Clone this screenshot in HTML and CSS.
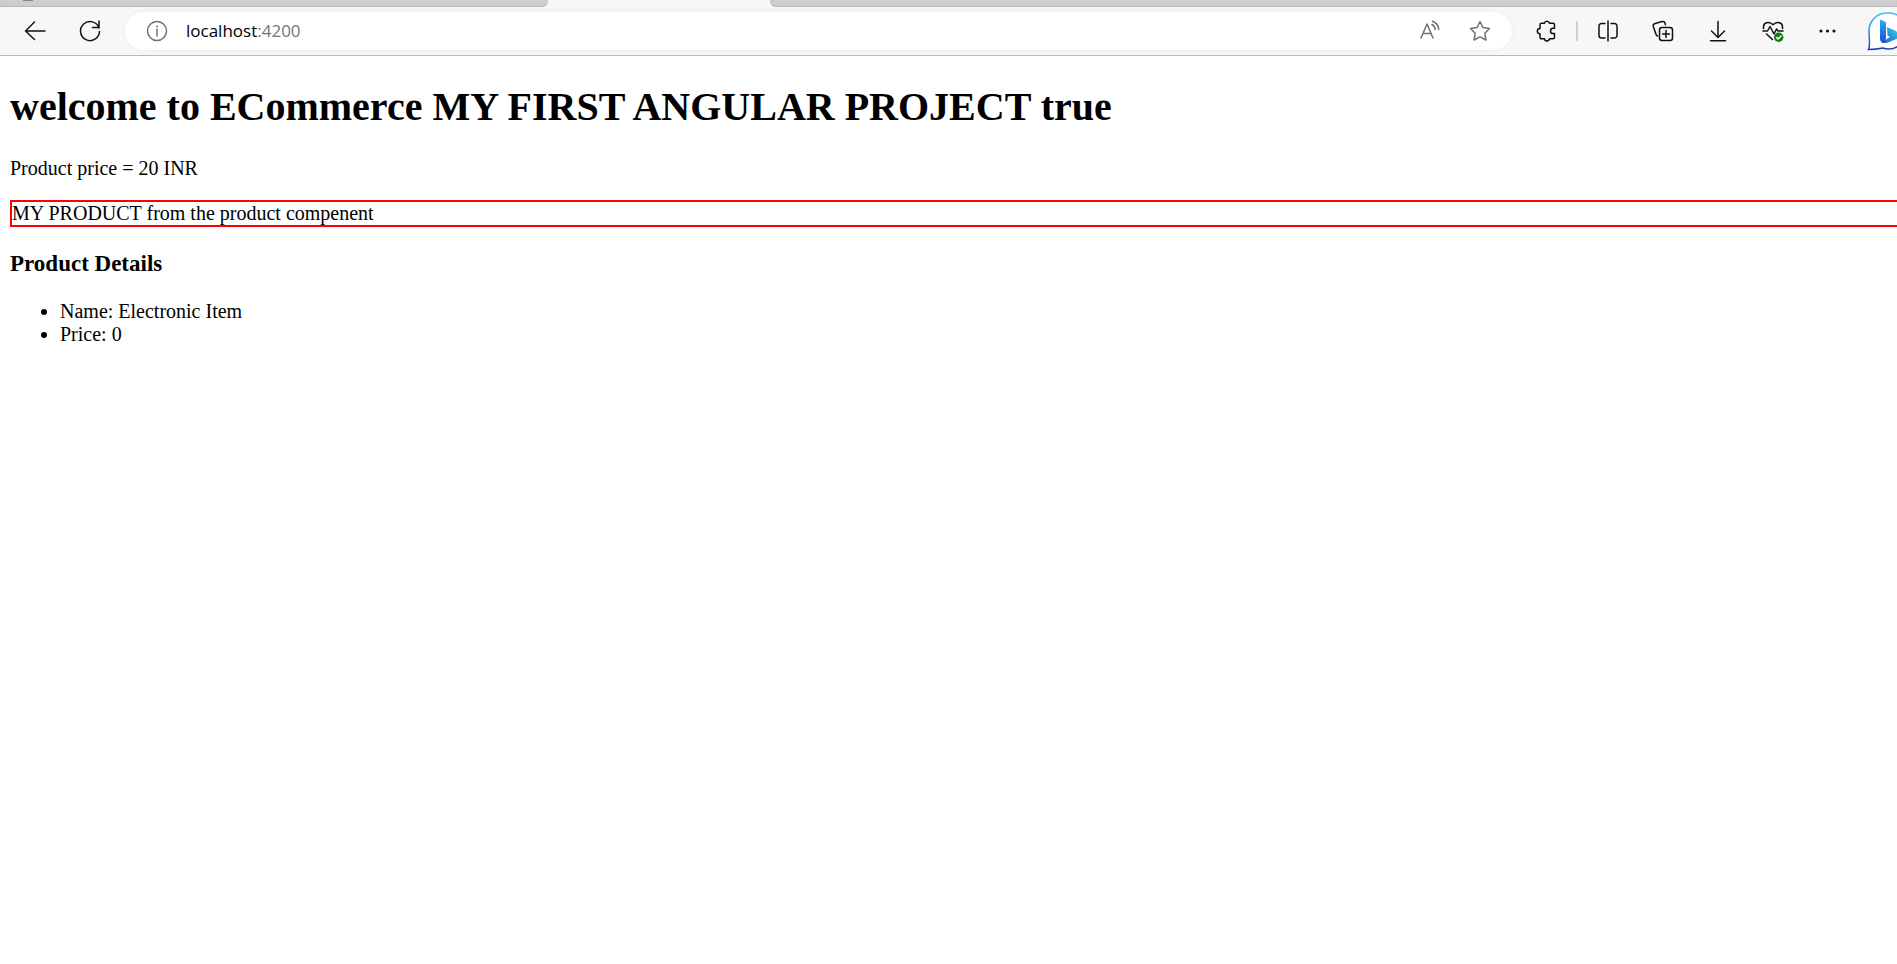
FILE: index.html
```html
<!DOCTYPE html>
<html lang="en">
<head>
<meta charset="utf-8">
<meta name="viewport" content="width=device-width, initial-scale=1">
<title>ECommerce</title>
<link rel="stylesheet" href="styles.css">
</head>
<body>
<header class="browser">
  <div class="tabs">
    <div class="tab-group tab-group-left"><span class="tab-dot"></span></div>
    <div class="tab-active"></div>
    <div class="tab-group tab-group-right"></div>
  </div>
  <div class="toolbar">
    <button class="tool" type="button" aria-label="Back">
      <svg class="icon" viewBox="0 0 24 24"><path d="M22 12H2.500M11.500 3 2.500 12l9 8.500"/></svg>
    </button>
    <button class="tool" type="button" aria-label="Refresh">
      <svg class="icon" viewBox="0 0 24 24"><path d="M21 9A9.500 9.500 0 1 0 21.500 12.500M21 2v6.500h-6.500"/></svg>
    </button>
    <div class="address">
      <button class="inner-tool" type="button" aria-label="Site information">
        <svg class="icon" viewBox="0 0 24 24"><circle cx="12" cy="12" r="9.500"/><path d="M12 10.500V17"/><circle class="solid" cx="12" cy="7.500" r="1"/></svg>
      </button>
      <span class="url">localhost<span class="port">:4200</span></span>
      <button class="inner-tool" type="button" aria-label="Read aloud">
        <svg class="icon" viewBox="0 0 24 24"><path d="M3 19 9 5l6 14M5 14.500h8M14 5.500c1.700 1 3 2.500 3.200 5M14.500 2.200c3.600 1.300 6 4.300 6.300 8.300"/></svg>
      </button>
      <button class="inner-tool" type="button" aria-label="Add to favourites">
        <svg class="icon" viewBox="0 0 24 24"><path d="M12 2.500l2.900 6 6.600 1-4.700 4.700 1.100 6.800L12 17.900 6.100 21l1.100-6.800L2.500 9.500l6.600-1z"/></svg>
      </button>
    </div>
    <button class="tool" type="button" aria-label="Extensions">
      <svg class="icon" viewBox="0 0 24 24"><path d="M6.500 4.200h2.800a2.700 2.700 0 0 1 5.200 0H18a1.500 1.500 0 0 1 1.500 1.500v3.500h-1.300a2.700 2.700 0 0 0 0 5.400h1.300v3.700a1.500 1.500 0 0 1-1.500 1.500h-3.500a2.600 2.600 0 0 1-5.100 0H6.500A1.500 1.500 0 0 1 5 18.300v-3.500a2.700 2.700 0 0 1 0-5.400V5.700a1.500 1.500 0 0 1 1.500-1.500z"/></svg>
    </button>
    <span class="divider"></span>
    <button class="tool" type="button" aria-label="Split screen">
      <svg class="icon" viewBox="0 0 24 24"><path d="M9 4.500H5.500a2.500 2.500 0 0 0-2.500 2.500v9.500a2.500 2.500 0 0 0 2.500 2.500H9M15 4.500h3.500a2.500 2.500 0 0 1 2.500 2.500v9.500a2.500 2.500 0 0 1-2.500 2.500H15M12 2v20"/></svg>
    </button>
    <button class="tool" type="button" aria-label="Collections">
      <svg class="icon" viewBox="0 0 24 24"><rect x="8.500" y="8.500" width="13" height="13" rx="2.500"/><path d="M15 11.500v7M11.500 15h7M6.500 17.200a3 3 0 0 1-1.500-2L2.300 7.500a2.500 2.500 0 0 1 1.800-3l7-2a2.500 2.500 0 0 1 3 1.800l.4 1.500"/></svg>
    </button>
    <button class="tool" type="button" aria-label="Downloads">
      <svg class="icon" viewBox="0 0 24 24"><path d="M12 2.500V18M5.500 12l6.500 6.500 6.500-6.500M4.500 21.700h15"/></svg>
    </button>
    <button class="tool" type="button" aria-label="Browser essentials">
      <svg class="icon" viewBox="0 0 24 24"><path d="M2.600 9.500C1.500 3.500 8 1.500 12 5.700 16 1.500 22.500 3.500 21.400 9.500M2 12h4.500L9 7.500l4 7.500 2.500-5 1.500 2h5M5.500 15l6 5.500"/><circle class="badge" cx="17.700" cy="18.300" r="4.700"/><path class="check" d="m15.500 18.500 1.500 1.500 3-3"/></svg>
    </button>
    <button class="tool" type="button" aria-label="More">
      <svg class="icon" viewBox="0 0 24 24"><circle class="solid" cx="5" cy="12" r="1.600"/><circle class="solid" cx="11.500" cy="12" r="1.600"/><circle class="solid" cx="18" cy="12" r="1.600"/></svg>
    </button>
    <button class="bing" type="button" aria-label="Bing">
      <svg class="bing-logo" viewBox="0 0 40 40">
        <defs>
          <linearGradient id="ring" x1="0" y1="0" x2="0" y2="1"><stop offset="0" stop-color="#35c3f3"/><stop offset=".55" stop-color="#2385de"/><stop offset="1" stop-color="#2340b0"/></linearGradient>
          <linearGradient id="stem" x1="0" y1="0" x2="0" y2="1"><stop offset="0" stop-color="#2ba8f5"/><stop offset="1" stop-color="#174fd0"/></linearGradient>
          <linearGradient id="bowl" x1="0" y1="1" x2="1" y2="0"><stop offset="0" stop-color="#1b55d8"/><stop offset="1" stop-color="#35d5e8"/></linearGradient>
        </defs>
        <path fill="#fff" stroke="url(#ring)" stroke-width="1.500" d="M20 2a18 18 0 1 1-4 35C11 38 6 38.500 1.500 38.500 3.500 35 2 26 2 20A18 18 0 0 1 20 2z"/>
        <path fill="url(#bowl)" d="M20 16 28 19.500c3.500 1.500 4 6 1.500 8.500L19.500 32l-5-.5L23 26l-2.500-1.500z"/>
        <path fill="url(#stem)" d="M13 8.500l4.500 2a2 2 0 0 1 1.500 1.800V27l-1 5c-2.500.5-5-1.500-5-4z"/>
      </svg>
    </button>
  </div>
</header>
<main class="page">
  <h1 class="title">welcome to ECommerce MY FIRST ANGULAR PROJECT true</h1>
  <p class="price">Product price = 20 INR</p>
  <div class="product">MY PRODUCT from the product compenent</div>
  <h3 class="subtitle">Product Details</h3>
  <ul class="details">
    <li>Name: Electronic Item</li>
    <li>Price: 0</li>
  </ul>
</main>
</body>
</html>
```
FILE: styles.css
```css
body {
  margin: 0;
  background: #fff;
  color: #000;
  font: 20px/23px "Liberation Serif", "Times New Roman", serif;
  overflow-x: hidden;
}

.browser {
  background: #f7f7f7;
  border-bottom: 1px solid #b8b8b8;
  overflow: hidden;
}

.tabs {
  display: flex;
  height: 7px;
}

.tab-group {
  background: #cdcdcd;
  box-shadow: inset 0 -1px 1px #b8b8b8;
  overflow: hidden;
}

.tab-group-left {
  flex: 0 0 548px;
  border-bottom-right-radius: 6px;
}

.tab-active {
  flex: 0 0 222px;
}

.tab-group-right {
  flex: 1;
  border-bottom-left-radius: 6px;
}

.tab-dot {
  display: block;
  width: 10px;
  height: 1px;
  margin-left: 23px;
  background: #858585;
}

.toolbar {
  display: flex;
  align-items: center;
  height: 48px;
  padding-left: 7px;
}

.tool,
.inner-tool,
.bing {
  display: flex;
  align-items: center;
  justify-content: center;
  flex: none;
  box-sizing: border-box;
  padding: 0 0 1px;
  border: 0;
  background: none;
  color: #111;
}

.tool {
  width: 55px;
  height: 40px;
}

.inner-tool {
  width: 50px;
  height: 38px;
  color: #707070;
}

.icon {
  width: 24px;
  height: 24px;
  fill: none;
  stroke: currentColor;
  stroke-width: 1.5;
  stroke-linecap: round;
  stroke-linejoin: round;
}

.solid {
  fill: currentColor;
  stroke: none;
}

.badge {
  fill: #107c10;
  stroke: none;
}

.check {
  stroke: #fff;
}

.address {
  display: flex;
  align-items: center;
  flex: 1;
  min-width: 0;
  height: 38px;
  margin: 0 7px 0 8px;
  padding: 0 7px;
  border-radius: 19px;
  background: #fff;
  box-shadow: 0 0 4px #ececec;
}

.url {
  flex: 1;
  padding: 0 0 1px 4px;
  font: 17px/24px "Open Sans", "Noto Sans", sans-serif;
}

.port {
  color: #757575;
}

.divider {
  flex: none;
  width: 2px;
  height: 20px;
  margin: 0 2px;
  background: #cfcfcf;
}

.bing {
  width: 42px;
  height: 40px;
  padding: 0 0 0 12px;
  justify-content: flex-start;
}

.bing-logo {
  flex: none;
  width: 40px;
  height: 40px;
}

.page {
  padding-left: 10px;
}

.title {
  margin: 28px 0 27px;
  font-size: 40px;
  line-height: 46px;
}

.price {
  margin: 0 0 20px;
}

.product {
  border: 2px solid #f00;
  border-right: 0;
}

.subtitle {
  margin: 23px 0;
  font-size: 23px;
  line-height: 27px;
}

.details {
  margin: 0;
  padding-left: 50px;
}
```
